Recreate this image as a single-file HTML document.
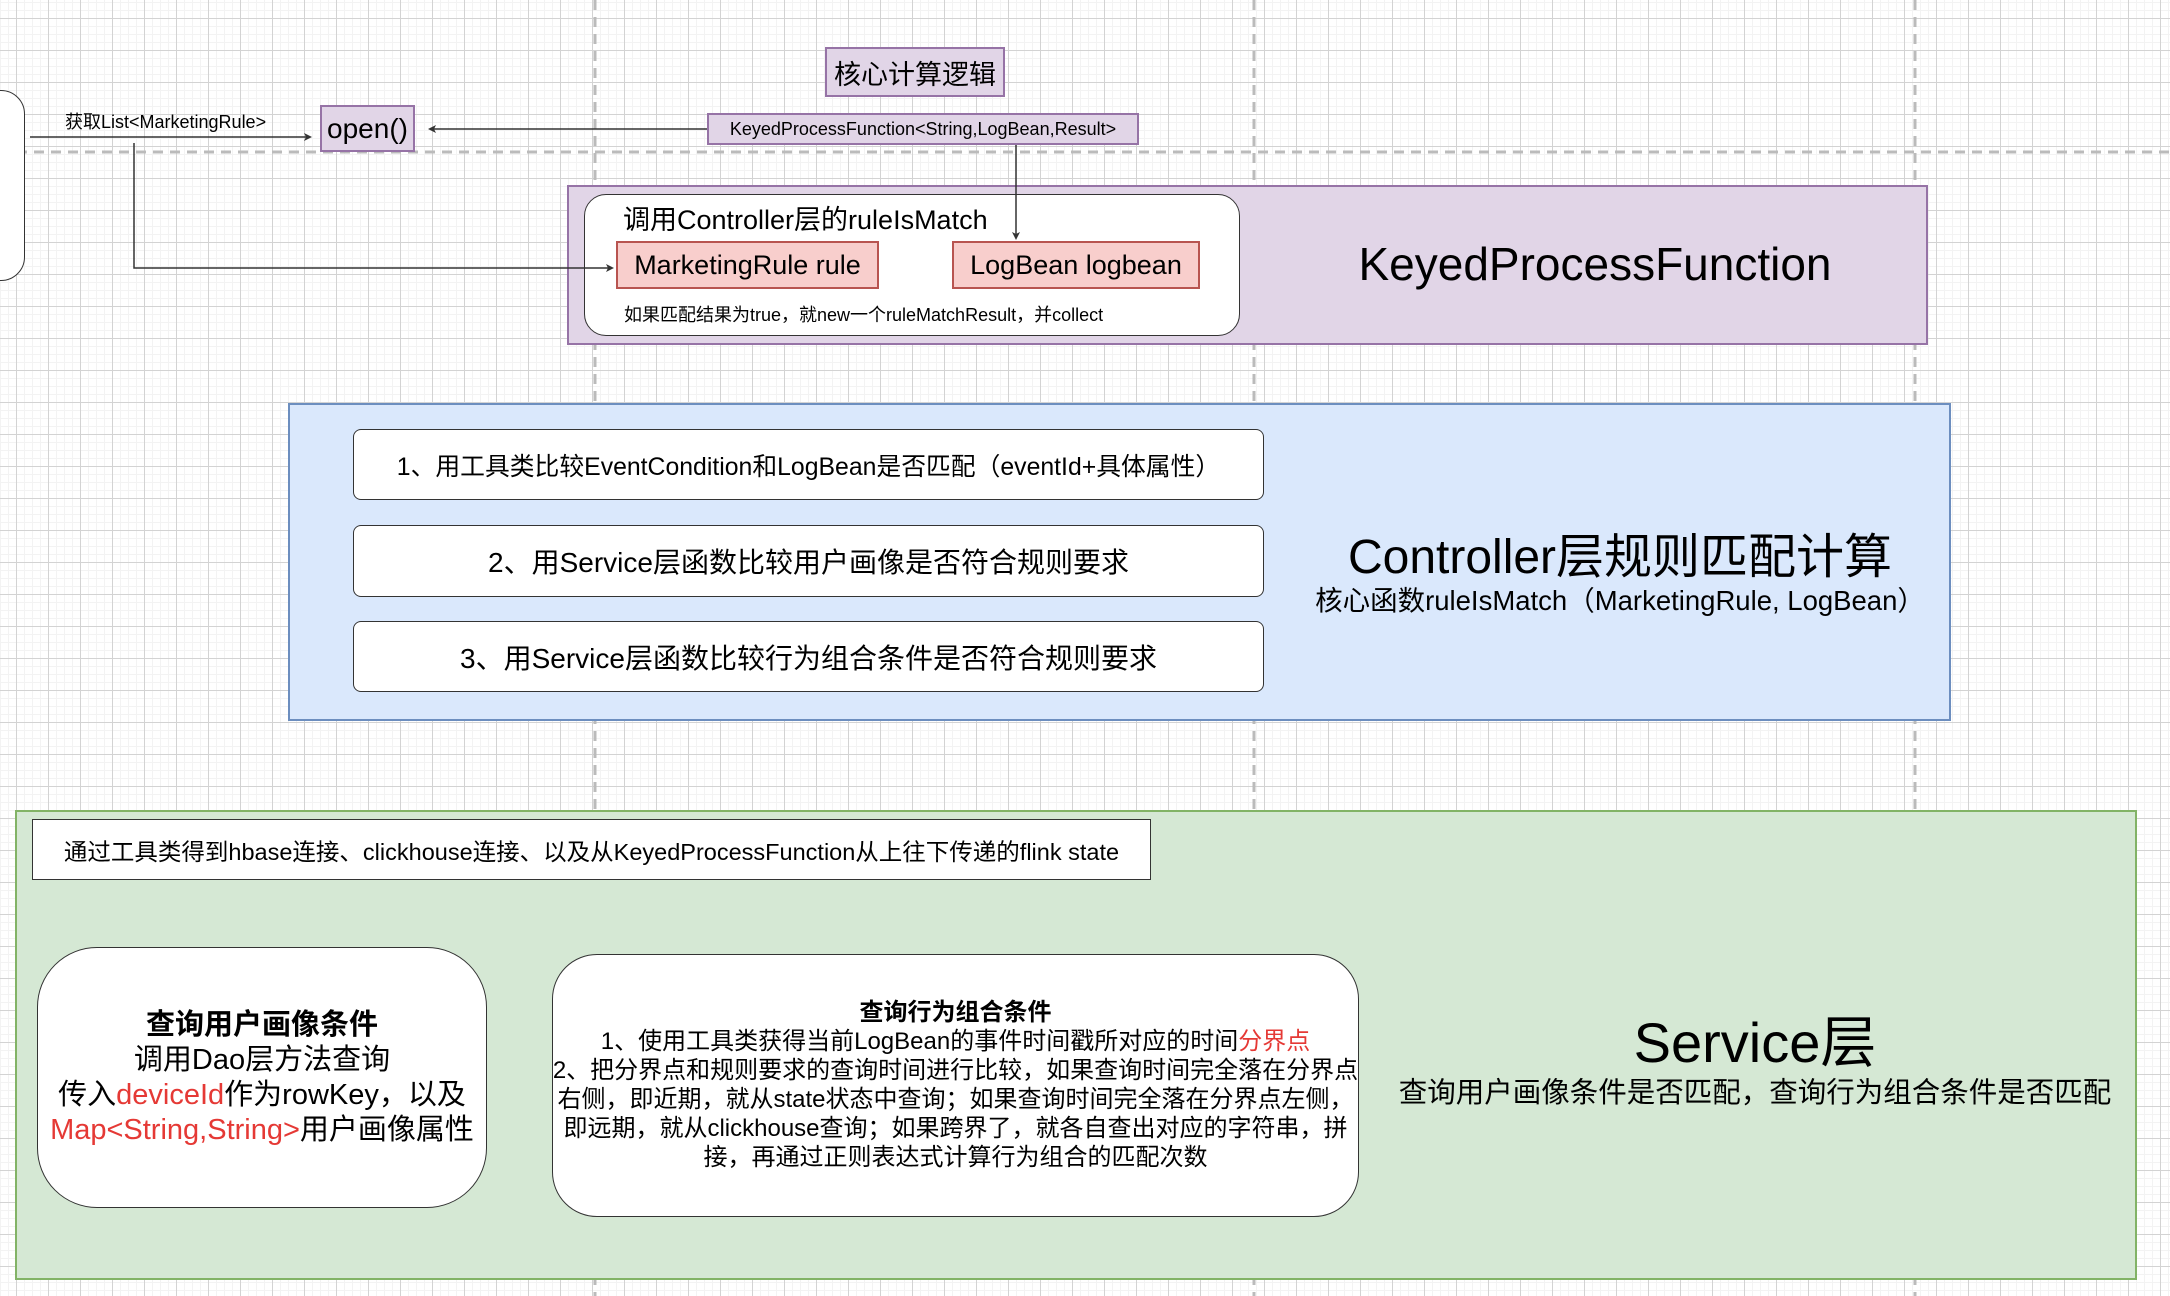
<!DOCTYPE html>
<html><head><meta charset="utf-8"><style>
*{margin:0;padding:0;box-sizing:border-box}
body{width:2170px;height:1296px;overflow:hidden;position:relative;font-family:"Liberation Sans","Noto Sans CJK SC",sans-serif;color:#000;
background-color:#fff;
background-image:
linear-gradient(to right,#d3d3d3 1px,transparent 1px),
linear-gradient(to bottom,#d3d3d3 1px,transparent 1px),
linear-gradient(to right,#f3f3f3 1px,transparent 1px),
linear-gradient(to bottom,#f3f3f3 1px,transparent 1px);
background-size:32px 32px,32px 32px,8px 8px,8px 8px;
background-position:16px 18px,16px 18px,0 2px,0 2px;}
.a{position:absolute}
.c{display:flex;align-items:center;justify-content:center;text-align:center;white-space:nowrap}
.pur{background:#e1d5e7;border:2px solid #9673a6}
.red{background:#f8cecc;border:2px solid #b85450}
.w{background:#fff;border:1.5px solid #333}
</style></head><body>
<svg class="a" style="left:0;top:0" width="2170" height="1296">
<g stroke="#bbb" stroke-width="3" stroke-dasharray="10 7" fill="none">
<line x1="0" y1="152" x2="2170" y2="152"/>
<line x1="595" y1="0" x2="595" y2="1296"/>
<line x1="1254" y1="0" x2="1254" y2="1296"/>
<line x1="1915" y1="0" x2="1915" y2="1296"/>
</g>
</svg>
<div class="a" style="left:-30px;top:90px;width:55px;height:191px;border:1.5px solid #333;border-radius:24px;background:#fff"></div>

<div class="a pur" style="left:567px;top:185px;width:1361px;height:160px"></div>
<div class="a" style="left:288px;top:403px;width:1663px;height:318px;background:#dae8fc;border:2px solid #6c8ebf"></div>
<div class="a" style="left:15px;top:810px;width:2122px;height:470px;background:#d5e8d4;border:2px solid #82b366"></div>

<div class="a" style="left:65px;top:108px;font-size:18px;white-space:nowrap">获取List&lt;MarketingRule&gt;</div>
<div class="a pur c" style="left:320px;top:105px;width:95px;height:47px;font-size:28px">open()</div>
<div class="a pur c" style="left:825px;top:47px;width:180px;height:50px;font-size:27px">核心计算逻辑</div>
<div class="a pur c" style="left:707px;top:113px;width:432px;height:32px;font-size:18px">KeyedProcessFunction&lt;String,LogBean,Result&gt;</div>

<div class="a" style="left:584px;top:194px;width:656px;height:142px;background:#fff;border:1.5px solid #333;border-radius:22px"></div>
<div class="a" style="left:623px;top:198px;font-size:27px;white-space:nowrap">调用Controller层的ruleIsMatch</div>
<div class="a red c" style="left:616px;top:241px;width:263px;height:48px;font-size:27px">MarketingRule rule</div>
<div class="a red c" style="left:952px;top:241px;width:248px;height:48px;font-size:27px">LogBean logbean</div>
<div class="a" style="left:624px;top:301px;font-size:18px;white-space:nowrap">如果匹配结果为true，就new一个ruleMatchResult，并collect</div>
<div class="a c" style="left:1250px;top:236px;width:690px;height:56px;font-size:46px">KeyedProcessFunction</div>

<div class="a w c" style="left:353px;top:429px;width:911px;height:71px;border-radius:8px;font-size:24.8px">1、用工具类比较EventCondition和LogBean是否匹配（eventId+具体属性）</div>
<div class="a w c" style="left:353px;top:525px;width:911px;height:72px;border-radius:8px;font-size:28px">2、用Service层函数比较用户画像是否符合规则要求</div>
<div class="a w c" style="left:353px;top:621px;width:911px;height:71px;border-radius:8px;font-size:28px">3、用Service层函数比较行为组合条件是否符合规则要求</div>
<div class="a c" style="left:1270px;top:522px;width:700px;height:60px;font-size:48px">Controller层规则匹配计算</div>
<div class="a c" style="left:1270px;top:581px;width:700px;height:34px;font-size:27.5px">核心函数ruleIsMatch（MarketingRule, LogBean）</div>

<div class="a w c" style="left:32px;top:819px;width:1119px;height:61px;font-size:23.5px">通过工具类得到hbase连接、clickhouse连接、以及从KeyedProcessFunction从上往下传递的flink state</div>

<div class="a w c" style="left:37px;top:947px;width:450px;height:261px;border-radius:60px;font-size:29px;line-height:35px;flex-direction:column">
<div style="font-weight:bold">查询用户画像条件</div>
<div>调用Dao层方法查询</div>
<div>传入<span style="color:#e53935">deviceId</span>作为rowKey，以及</div>
<div><span style="color:#e53935">Map&lt;String,String&gt;</span>用户画像属性</div>
</div>

<div class="a w c" style="left:552px;top:954px;width:807px;height:263px;border-radius:45px;font-size:24px;line-height:29px;flex-direction:column;padding-bottom:2px">
<div style="font-weight:bold">查询行为组合条件</div>
<div>1、使用工具类获得当前LogBean的事件时间戳所对应的时间<span style="color:#e53935">分界点</span></div>
<div>2、把分界点和规则要求的查询时间进行比较，如果查询时间完全落在分界点</div>
<div>右侧，即近期，就从state状态中查询；如果查询时间完全落在分界点左侧，</div>
<div>即远期，就从clickhouse查询；如果跨界了，就各自查出对应的字符串，拼</div>
<div>接，再通过正则表达式计算行为组合的匹配次数</div>
</div>

<div class="a c" style="left:1390px;top:1003px;width:730px;height:70px;font-size:56px">Service层</div>
<div class="a c" style="left:1390px;top:1072px;width:730px;height:36px;font-size:28.5px">查询用户画像条件是否匹配，查询行为组合条件是否匹配</div>

<svg class="a" style="left:0;top:0" width="2170" height="1296">
<g stroke="#333" stroke-width="1.5" fill="none">
<line x1="30" y1="137" x2="306" y2="137"/>
<line x1="707" y1="129" x2="434" y2="129"/>
<polyline points="134,143 134,268 608,268"/>
<line x1="1016" y1="145" x2="1016" y2="234"/>
</g>
<g fill="#333">
<polygon points="312,137 304,133 306,137 304,141"/>
<polygon points="428,129 436,125 434,129 436,133"/>
<polygon points="614,268 606,264 608,268 606,272"/>
<polygon points="1016,240 1012,232 1016,234 1020,232"/>
</g>
</svg>
</body></html>
